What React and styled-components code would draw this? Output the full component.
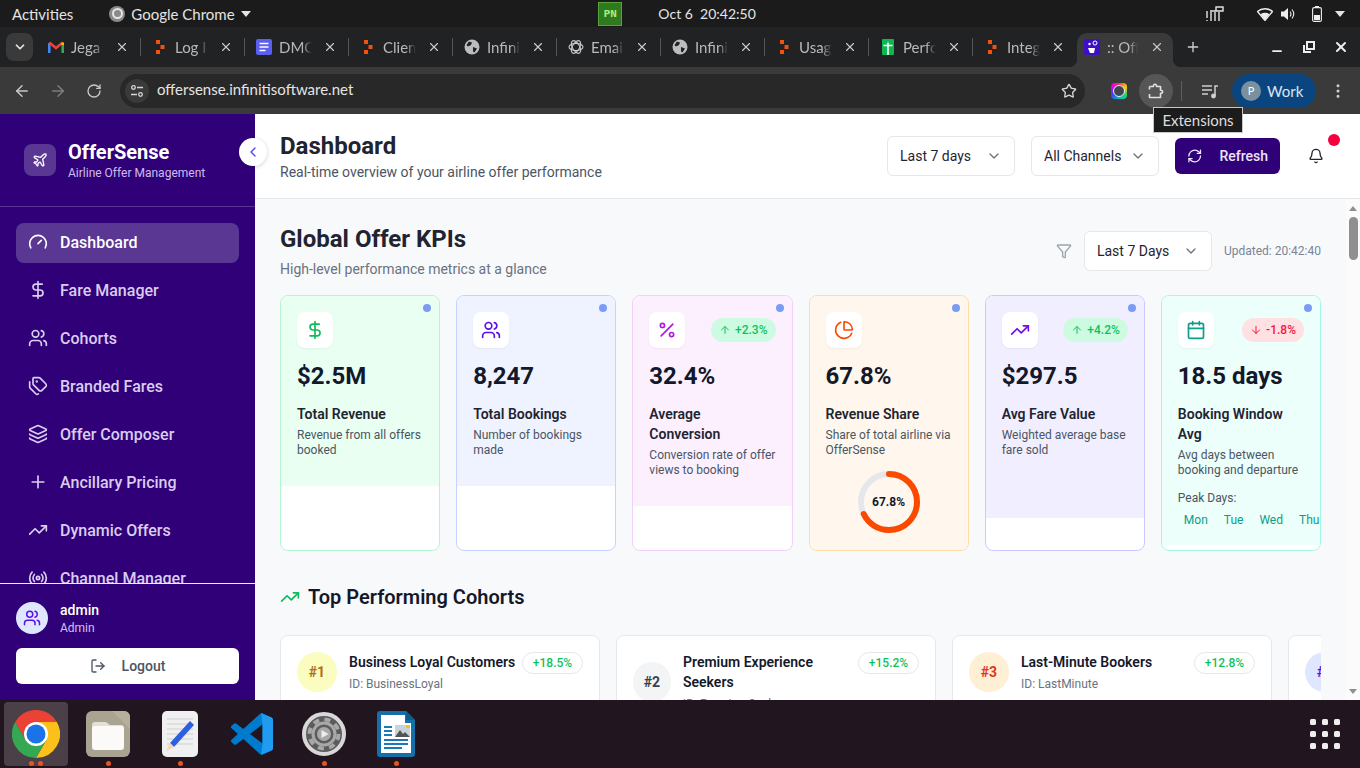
import React from "react";
import styled, { createGlobalStyle } from "styled-components";
import {
  ArrowDown, ArrowLeft, ArrowRight, ArrowUp, Bell, Calendar, ChartPie, ChevronDown, ChevronLeft,
  DollarSign, EllipsisVertical, Funnel, Gauge, Layers, LogOut, Percent, Plane, Plus, Radio,
  RefreshCw, RotateCw, Star, Tags, TrendingUp, Users, X, Minus,
} from "lucide-react";

const GlobalStyle = createGlobalStyle`
  html, body { margin: 0; padding: 0; background: #211520; }
  body { font-family: Roboto, "Liberation Sans", sans-serif; }
  * { box-sizing: border-box; }
`;

const PURPLE = "#300078";
const SYSTEM_FONT = `Lato, "Noto Sans", sans-serif`;

/* ---------- desktop + chrome ---------- */

const Screen = styled.div`
  width: 1360px;
  height: 768px;
  display: flex;
  flex-direction: column;
  overflow: hidden;
  position: relative;
`;

const TopBar = styled.div`
  height: 27px;
  background: #1b1b1b;
  color: #e4e4e4;
  font-family: ${SYSTEM_FONT};
  font-size: 15px;
  display: flex;
  align-items: center;
  padding: 0 9px 0 12px;
  flex-shrink: 0;
`;

const AppMenu = styled.div`
  display: flex;
  align-items: center;
  gap: 6px;
  margin-left: 36px;
  width: 489px;
`;

const AppBadge = styled.span`
  width: 16px;
  height: 16px;
  border-radius: 50%;
  background: #8a8a8a;
  display: grid;
  place-items: center;
  &::after {
    content: "";
    width: 7px;
    height: 7px;
    border-radius: 50%;
    border: 2px solid #e6e6e6;
  }
`;

const Caret = styled.span`
  width: 0;
  height: 0;
  border-left: 5px solid transparent;
  border-right: 5px solid transparent;
  border-top: 6px solid #e4e4e4;
`;

const PnBadge = styled.span`
  width: 24px;
  height: 24px;
  background: #2f7a1e;
  border: 1px solid #55a63a;
  color: #a8ef7c;
  font: 700 11px "Liberation Mono", monospace;
  display: grid;
  place-items: center;
`;

const Clock = styled.span`
  margin-left: 36px;
  font-size: 14px;
  white-space: pre;
`;

const TrayIcons = styled.div`
  margin-left: auto;
  display: flex;
  align-items: center;
`;

const TraySlot = styled.span`
  display: grid;
  place-items: center;
  width: ${(p) => p.$w}px;
`;

const TabStrip = styled.div`
  height: 40px;
  background: #202223;
  display: flex;
  align-items: flex-end;
  padding-left: 6px;
  flex-shrink: 0;
`;

const TabSearch = styled.span`
  width: 27px;
  height: 28px;
  margin-bottom: 6px;
  border-radius: 8px;
  background: #3a3a3a;
  color: #e4e4e4;
  display: grid;
  place-items: center;
  margin-right: 4px;
`;

const Tab = styled.div`
  width: ${(p) => (p.$active ? 96 : 104)}px;
  height: ${(p) => (p.$active ? 34 : 28)}px;
  margin-bottom: ${(p) => (p.$active ? 0 : 6)}px;
  padding: ${(p) => (p.$active ? "0 9px 6px 7px" : "0 12px 0 11px")};
  display: flex;
  align-items: center;
  gap: 7px;
  color: #b9b9b9;
  font-family: ${SYSTEM_FONT};
  font-size: 15px;
  position: relative;
  background: ${(p) => (p.$active ? "#3a3a3a" : "transparent")};
  border-radius: ${(p) => (p.$active ? "10px 10px 0 0" : "0")};
  &::after {
    content: "";
    display: ${(p) => (p.$last || p.$active ? "none" : "block")};
    position: absolute;
    right: 0;
    top: 5px;
    width: 1px;
    height: 18px;
    background: #555;
  }
`;

const TabFlare = styled.span`
  position: absolute;
  bottom: 0;
  width: 8px;
  height: 8px;
  ${(p) => (p.$side === "left" ? "left: -8px;" : "right: -8px;")}
  background: radial-gradient(
    circle at ${(p) => (p.$side === "left" ? "0 0" : "100% 0")},
    transparent 8px,
    #3a3a3a 8.5px
  );
`;

const TabFavicon = styled.span`
  width: 16px;
  height: 16px;
  flex-shrink: 0;
  display: grid;
  place-items: center;
`;

const TabTitle = styled.span`
  width: ${(p) => (p.$active ? 31 : 33)}px;
  overflow: hidden;
  white-space: nowrap;
  -webkit-mask-image: linear-gradient(to right, #000 70%, transparent);
  mask-image: linear-gradient(to right, #000 70%, transparent);
`;

const TabClose = styled.span`
  margin-left: auto;
  display: grid;
  place-items: center;
  color: #c8c8c8;
`;

const NewTab = styled.span`
  margin: 0 0 6px 12px;
  height: 28px;
  color: #d0d0d0;
  display: grid;
  place-items: center;
`;

const WindowControls = styled.div`
  margin: 0 0 6px auto;
  padding-right: 3px;
  height: 28px;
  display: flex;
  align-items: center;
  color: #eee;
`;

const WindowButton = styled.span`
  width: 32px;
  display: grid;
  place-items: center;
  padding-top: ${(p) => (p.$low ? 7 : 0)}px;
`;

const Toolbar = styled.div`
  height: 47px;
  background: #3a3a3a;
  display: flex;
  align-items: center;
  flex-shrink: 0;
  padding-left: 4px;
  color: #c8c8c8;
`;

const NavIcon = styled.span`
  width: 36px;
  display: grid;
  place-items: center;
  color: ${(p) => (p.$dim ? "#7d7d7d" : "#c8c8c8")};
`;

const Omnibox = styled.div`
  margin-left: 8px;
  width: 965px;
  height: 34px;
  border-radius: 17px;
  background: #282828;
  display: flex;
  align-items: center;
  padding: 0 4px 0 5px;
  font-family: ${SYSTEM_FONT};
  font-size: 15px;
  color: #e4e4e4;
`;

const OmniText = styled.span`
  padding-bottom: 3px;
`;

const SiteInfo = styled.span`
  width: 24px;
  height: 24px;
  border-radius: 50%;
  background: #3a3a3a;
  display: grid;
  place-items: center;
  margin-right: 8px;
`;

const StarSlot = styled.span`
  margin-left: auto;
  width: 24px;
  display: grid;
  place-items: center;
  color: #d8d8d8;
`;

const ExtensionRing = styled.span`
  width: 16px;
  height: 16px;
  margin-left: 26px;
  border-radius: 4px;
  background: conic-gradient(#ff2d55, #ffcc00, #25d366, #00bcd4, #3a42ff, #d500f9, #ff2d55);
  display: grid;
  place-items: center;
  &::after {
    content: "";
    width: 10px;
    height: 10px;
    border-radius: 50%;
    background: #3b4650;
    border: 1.5px solid #eee;
  }
`;

const ExtensionsButton = styled.span`
  width: 34px;
  height: 34px;
  margin-left: 12px;
  border-radius: 50%;
  background: #565656;
  display: grid;
  place-items: center;
`;

const ToolbarDivider = styled.span`
  width: 1px;
  height: 20px;
  background: #5e5e5e;
  margin: 0 19px 0 8px;
`;

const ProfilePill = styled.span`
  width: 84px;
  height: 34px;
  margin-left: 13px;
  border-radius: 17px;
  background: #0b4580;
  display: flex;
  align-items: center;
  gap: 6px;
  padding-left: 9px;
  color: #dce6f0;
  font-family: ${SYSTEM_FONT};
  font-size: 15px;
`;

const ProfileAvatar = styled.span`
  width: 20px;
  height: 20px;
  border-radius: 50%;
  background: #7a909f;
  color: #fff;
  font-size: 11px;
  display: grid;
  place-items: center;
`;

const MenuDots = styled.span`
  margin-left: 13px;
  display: grid;
  place-items: center;
  color: #d0d0d0;
`;

const Tooltip = styled.div`
  position: absolute;
  left: 1153px;
  top: 107px;
  width: 90px;
  height: 26px;
  background: #1c1c1c;
  border: 1px solid #c8c8c8;
  color: #dedede;
  font-family: ${SYSTEM_FONT};
  font-size: 15px;
  display: grid;
  place-items: center;
  z-index: 5;
`;

/* ---------- app shell ---------- */

const AppFrame = styled.div`
  height: 586px;
  display: flex;
  flex-shrink: 0;
  background: #f8f9fb;
`;

const Sidebar = styled.aside`
  width: 255px;
  flex-shrink: 0;
  background: ${PURPLE};
  display: flex;
  flex-direction: column;
  position: relative;
  z-index: 2;
`;

const BrandRow = styled.div`
  height: 93px;
  flex-shrink: 0;
  border-bottom: 1px solid #5a3793;
  display: flex;
  align-items: center;
  gap: 12px;
  padding: 0 24px;
`;

const BrandMark = styled.span`
  width: 32px;
  height: 32px;
  border-radius: 8px;
  background: #5a3793;
  color: #fff;
  display: grid;
  place-items: center;
`;

const BrandName = styled.div`
  color: #fff;
  font-size: 20px;
  font-weight: 700;
  line-height: 26px;
`;

const BrandTag = styled.div`
  color: #cdbdea;
  font-size: 12px;
  line-height: 16px;
`;

const CollapseButton = styled.span`
  position: absolute;
  left: 239px;
  top: 24px;
  width: 28px;
  height: 28px;
  border-radius: 50%;
  background: #fff;
  color: #4f46e5;
  box-shadow: 0 1px 4px rgba(0, 0, 0, 0.18);
  display: grid;
  place-items: center;
`;

const NavList = styled.nav`
  flex: 1;
  min-height: 0;
  overflow: hidden;
  padding: 16px 16px 0;
  display: flex;
  flex-direction: column;
  gap: 8px;
`;

const NavItem = styled.div`
  height: 40px;
  flex-shrink: 0;
  border-radius: 8px;
  padding: 0 0 2px 12px;
  display: flex;
  align-items: center;
  gap: 12px;
  font-size: 16px;
  font-weight: 500;
  color: ${(p) => (p.$active ? "#fff" : "#d9cdf0")};
  background: ${(p) => (p.$active ? "#5a3793" : "transparent")};
`;

const SidebarFooter = styled.div`
  height: 117px;
  flex-shrink: 0;
  border-top: 1px solid #f0ebf8;
  padding: 18px 16px 16px;
  display: flex;
  flex-direction: column;
  gap: 14px;
`;

const UserRow = styled.div`
  display: flex;
  align-items: flex-start;
  gap: 12px;
  height: 32px;
`;

const UserAvatar = styled.span`
  width: 32px;
  height: 32px;
  border-radius: 50%;
  background: #dfe6ff;
  color: #5b10e8;
  display: grid;
  place-items: center;
`;

const UserName = styled.div`
  color: #fff;
  font-size: 14px;
  font-weight: 500;
  line-height: 17px;
`;

const UserRole = styled.div`
  color: #d0c2ea;
  font-size: 12px;
  line-height: 15px;
  margin-top: 2px;
`;

const LogoutButton = styled.div`
  height: 36px;
  border-radius: 6px;
  background: #fff;
  color: #4b5563;
  font-size: 14px;
  font-weight: 500;
  display: flex;
  align-items: center;
  justify-content: center;
  gap: 16px;
`;

const Main = styled.main`
  flex: 1;
  min-width: 0;
  display: flex;
  flex-direction: column;
`;

const PageHeader = styled.header`
  height: 85px;
  flex-shrink: 0;
  background: #fff;
  border-bottom: 1px solid #e5e7eb;
  padding: 0 26px 1px 25px;
  display: flex;
  align-items: center;
  justify-content: space-between;
`;

const PageTitle = styled.h1`
  margin: 0;
  padding-top: 1px;
  font-size: 24px;
  font-weight: 700;
  line-height: 32px;
  color: #1f2430;
`;

const PageSubtitle = styled.p`
  margin: 0;
  font-size: 14px;
  line-height: 20px;
  color: #4b5563;
`;

const HeaderControls = styled.div`
  display: flex;
  align-items: center;
  gap: 16px;
`;

const SelectBox = styled.div`
  width: 128px;
  height: 40px;
  padding: 0 12px;
  background: #fff;
  border: 1px solid #e5e7eb;
  border-radius: 6px;
  display: flex;
  align-items: center;
  justify-content: space-between;
  font-size: 14px;
  color: #1f2430;
  svg { color: #6b7280; }
`;

const RefreshButton = styled.div`
  width: 105px;
  height: 36px;
  padding: 0 12px;
  border-radius: 6px;
  background: ${PURPLE};
  color: #ebe4fb;
  font-size: 14px;
  font-weight: 500;
  display: flex;
  align-items: center;
  gap: 17px;
`;

const BellButton = styled.span`
  width: 36px;
  height: 36px;
  margin-left: 2px;
  color: #1f2430;
  position: relative;
  display: grid;
  place-items: center;
`;

const BellDot = styled.span`
  position: absolute;
  top: -4px;
  right: -6px;
  width: 12px;
  height: 12px;
  border-radius: 50%;
  background: #f5003d;
`;

const Body = styled.div`
  flex: 1;
  min-height: 0;
  display: flex;
`;

const Content = styled.div`
  flex: 1;
  min-width: 0;
  overflow: hidden;
  padding: 23px 25px 0;
`;

const ScrollRail = styled.div`
  width: 14px;
  flex-shrink: 0;
  background: #fbfbfc;
  display: flex;
  flex-direction: column;
  align-items: center;
  padding: 7px 0 6px 0;
`;

const ScrollArrow = styled.span`
  width: 0;
  height: 0;
  border-left: 4.5px solid transparent;
  border-right: 4.5px solid transparent;
  ${(p) => (p.$down ? "border-top: 5px solid #8f8f8f; margin-top: auto;" : "border-bottom: 5px solid #8f8f8f;")}
`;

const ScrollThumb = styled.span`
  width: 9px;
  height: 43px;
  margin-top: 6px;
  border-radius: 5px;
  background: #8f8f8f;
`;

const SectionHead = styled.div`
  display: flex;
  align-items: center;
  justify-content: space-between;
  margin-bottom: 16px;
`;

const SectionTitle = styled.h2`
  margin: 0;
  padding-top: 1px;
  font-size: 24px;
  font-weight: 700;
  line-height: 32px;
  color: #1f2430;
`;

const SectionSubtitle = styled.p`
  margin: 4px 0 0;
  font-size: 14px;
  line-height: 20px;
  color: #6b7280;
`;

const SectionTools = styled.div`
  display: flex;
  align-items: center;
  color: #9ca3af;
`;

const ToolSelect = styled(SelectBox)`
  margin-left: 12px;
`;

const UpdatedAt = styled.span`
  margin-left: 12px;
  font-size: 12px;
  color: #7b8494;
`;

/* ---------- KPI cards ---------- */

const KpiGrid = styled.div`
  display: grid;
  grid-template-columns: repeat(6, 1fr);
  gap: 16px;
  height: 256px;
`;

const KpiCard = styled.article`
  position: relative;
  background: #fff;
  border: 1px solid ${(p) => p.$border};
  border-radius: 8px;
  overflow: hidden;
  display: flex;
  flex-direction: column;
`;

const KpiFill = styled.div`
  background: ${(p) => p.$bg};
  padding: 16px 16px ${(p) => p.$pb}px;
  flex: ${(p) => (p.$stretch ? 1 : "none")};
  min-width: 0;
`;

const KpiDot = styled.span`
  position: absolute;
  top: 8px;
  right: 8px;
  width: 8px;
  height: 8px;
  border-radius: 50%;
  background: #7c9bf5;
`;

const KpiTop = styled.div`
  display: flex;
  align-items: center;
  justify-content: space-between;
  margin-bottom: 12px;
`;

const KpiIcon = styled.span`
  width: 36px;
  height: 36px;
  border-radius: 8px;
  background: #fff;
  box-shadow: 0 1px 2px rgba(0, 0, 0, 0.05);
  color: ${(p) => p.$color};
  display: grid;
  place-items: center;
`;

const TrendBadge = styled.span`
  height: 24px;
  padding: 0 8px;
  border-radius: 12px;
  background: ${(p) => (p.$down ? "#ffe0e3" : "#cdfbe2")};
  color: ${(p) => (p.$down ? "#f5153f" : "#10c25b")};
  font-size: 12px;
  font-weight: 500;
  display: flex;
  align-items: center;
  gap: 4px;
  white-space: nowrap;
`;

const KpiValue = styled.div`
  font-size: 24px;
  font-weight: 700;
  line-height: 32px;
  color: #14182b;
  margin-bottom: 12px;
`;

const KpiTitle = styled.div`
  max-width: 120px;
  font-size: 14px;
  font-weight: 600;
  line-height: 20px;
  color: #1f2430;
`;

const KpiDesc = styled.div`
  margin-top: 4px;
  font-size: 12px;
  line-height: 15px;
  color: #4b5563;
`;

const DonutWrap = styled.div`
  display: grid;
  place-items: center;
  margin-top: 12px;
  & > * { grid-area: 1 / 1; }
`;

const DonutLabel = styled.span`
  font-size: 12px;
  font-weight: 700;
  color: #14182b;
`;

const PeakLabel = styled.div`
  margin-top: 12px;
  font-size: 12px;
  line-height: 16px;
  color: #4b5563;
`;

const PeakRow = styled.div`
  display: flex;
  gap: 4px;
  margin-top: 4px;
`;

const PeakChip = styled.span`
  padding: 2px 6px;
  font-size: 12px;
  line-height: 16px;
  color: #0d9d8a;
`;

/* ---------- cohorts ---------- */

const CohortHeading = styled.h2`
  margin: 32px 0 24px;
  font-size: 20px;
  font-weight: 600;
  line-height: 28px;
  color: #14182b;
  display: flex;
  align-items: center;
  gap: 8px;
  svg { color: #10b95a; }
`;

const CohortRow = styled.div`
  display: flex;
  gap: 16px;
  overflow: hidden;
`;

const CohortCard = styled.article`
  width: 320px;
  flex-shrink: 0;
  background: #fff;
  border: 1px solid #e5e7eb;
  border-radius: 8px;
  padding: 16px;
  display: flex;
  align-items: flex-start;
  justify-content: space-between;
  gap: 6px;
`;

const CohortMain = styled.div`
  display: flex;
  align-items: center;
  gap: 12px;
  min-width: 0;
`;

const RankCircle = styled.span`
  width: ${(p) => p.$w}px;
  height: 40px;
  flex-shrink: 0;
  border-radius: 50%;
  background: ${(p) => p.$bg};
  color: ${(p) => p.$color};
  font-size: 14px;
  font-weight: 700;
  display: grid;
  place-items: center;
`;

const CohortName = styled.div`
  font-size: 14px;
  font-weight: 600;
  line-height: 20px;
  color: #14182b;
`;

const CohortId = styled.div`
  margin-top: 4px;
  font-size: 12px;
  line-height: 16px;
  color: #6b7280;
  white-space: nowrap;
`;

const LiftBadge = styled.span`
  width: 61px;
  height: 22px;
  flex-shrink: 0;
  border: 1px solid #e5e7eb;
  border-radius: 11px;
  color: #10c25b;
  font-size: 12px;
  font-weight: 500;
  display: grid;
  place-items: center;
`;

/* ---------- dock ---------- */

const Dock = styled.footer`
  height: 68px;
  flex-shrink: 0;
  background: #211520;
  display: flex;
  align-items: center;
  position: relative;
  z-index: 3;
`;

const DockSlot = styled.div`
  width: 72px;
  height: 64px;
  position: relative;
  display: grid;
  place-items: center;
  &::before {
    content: "";
    display: ${(p) => (p.$active ? "block" : "none")};
    position: absolute;
    inset: 0 4px;
    background: #4b4048;
    border-radius: 4px;
  }
  & > svg { position: relative; }
`;

const DockPips = styled.span`
  position: absolute;
  bottom: 0;
  left: 0;
  right: 0;
  display: flex;
  justify-content: center;
  gap: 4px;
`;

const DockPip = styled.span`
  width: 5px;
  height: 5px;
  border-radius: 50%;
  background: #e95420;
`;

const AppGrid = styled.div`
  margin-left: auto;
  margin-right: 20px;
  display: grid;
  grid-template-columns: repeat(3, 6px);
  gap: 6px;
`;

const AppGridDot = styled.span`
  width: 6px;
  height: 6px;
  border-radius: 1.5px;
  background: #eee;
`;

/* ---------- drawn icons ---------- */

const GmailIcon = () => (
  <svg width="16" height="14" viewBox="0 0 16 14" fill="none" strokeWidth="2.6">
    <path d="M1.3 13V3" stroke="#4285f4" />
    <path d="M14.7 13V3" stroke="#34a853" />
    <path d="M1.3 2.5L8 8l6.7-5.5" stroke="#ea4335" />
    <path d="M14.7 5V2.5" stroke="#fbbc04" />
  </svg>
);

const ZohoIcon = () => (
  <svg width="10" height="14" viewBox="0 0 10 14" fill="#f4500f">
    <rect x="1" y="0" width="4" height="4" />
    <rect x="5.5" y="5" width="4" height="4" />
    <rect x="1" y="10" width="4" height="4" />
  </svg>
);

const DocIcon = () => (
  <svg width="16" height="16" viewBox="0 0 16 16">
    <rect width="16" height="16" rx="2" fill="#5b5ff0" />
    <path d="M3.5 4.5h9M3.5 8h9M3.5 11.5h6" stroke="#fff" strokeWidth="1.7" />
  </svg>
);

const GlobeIcon = () => (
  <svg width="16" height="16" viewBox="0 0 16 16">
    <circle cx="8" cy="8" r="7.5" fill="#bdbdbd" />
    <path d="M5 2.5l3 1-1 2.5-3 1.5L2.5 6zM9 8l4 1.5-2.5 4-1.5-1z" fill="#202223" />
  </svg>
);

const KnotIcon = () => (
  <svg width="16" height="16" viewBox="0 0 16 16" fill="none" stroke="#c8c8c8" strokeWidth="1.1">
    <ellipse cx="8" cy="8" rx="7" ry="3.6" />
    <ellipse cx="8" cy="8" rx="7" ry="3.6" transform="rotate(60 8 8)" />
    <ellipse cx="8" cy="8" rx="7" ry="3.6" transform="rotate(120 8 8)" />
  </svg>
);

const SheetIcon = () => (
  <svg width="12" height="16" viewBox="0 0 12 16">
    <rect width="12" height="16" rx="1" fill="#0fb652" />
    <path d="M6 3.5V16M1.5 6.5h9" stroke="#fff" strokeWidth="1.5" />
  </svg>
);

const OfferIcon = () => (
  <svg width="16" height="16" viewBox="0 0 16 16">
    <rect width="16" height="16" rx="2" fill="#3d10c8" />
    <circle cx="11" cy="4" r="2" fill="none" stroke="#fff" strokeWidth="1" />
    <circle cx="5.5" cy="5" r="1.2" fill="#fff" />
    <path d="M4 9h7l-1 5H6z" fill="#fff" />
  </svg>
);

const TuneIcon = () => (
  <svg width="14" height="14" viewBox="0 0 14 14" fill="none" stroke="#d6d6d6" strokeWidth="1.3">
    <circle cx="3.5" cy="3.5" r="1.8" />
    <path d="M7 3.5h6M1 10.5h6" />
    <circle cx="10.5" cy="10.5" r="1.8" />
  </svg>
);

const PuzzleIcon = () => (
  <svg width="20" height="20" viewBox="0 0 20 20" fill="none" stroke="#e0e0e0" strokeWidth="1.6">
    <path d="M3.5 5.5h4c-.5-3 3.5-3 3 0h4v3.8c2.8-.5 2.8 3.5 0 3v4.200h-11v-3.500M3.500 5.500v3" strokeLinejoin="round" />
  </svg>
);

const QueueIcon = () => (
  <svg width="18" height="16" viewBox="0 0 18 16" fill="none" stroke="#d0d0d0" strokeWidth="1.5">
    <path d="M1 3h10M1 7h10M1 11h6" />
    <path d="M14 13V3h3" />
    <circle cx="12.500" cy="13" r="1.700" fill="#d0d0d0" />
  </svg>
);

const TrayBars = () => (
  <svg width="18" height="16" viewBox="0 0 18 16" fill="none" stroke="#e4e4e4" strokeWidth="1.4">
    <path d="M1 5v7M1 14v1M5 6v9M9 6v9M13 6v9M4 5h13M10 1h7v4h-7z" />
  </svg>
);

const WifiIcon = () => (
  <svg width="16" height="14" viewBox="0 0 16 14">
    <path d="M8 13.500L.5 4.500C4.500.8 11.500.8 15.500 4.500z" fill="none" stroke="#eee" strokeWidth="1.300" />
    <path d="M8 13L3.500 7.200c2.800-1.800 6.200-1.800 9 0z" fill="#eee" />
  </svg>
);

const VolumeIcon = () => (
  <svg width="14" height="14" viewBox="0 0 14 14" fill="none">
    <path d="M0 4.500h3L7 1v12L3 9.500H0z" fill="#eee" />
    <path d="M9 4.500c1.200 1.500 1.200 3.500 0 5M11 2.500c2.200 2.800 2.200 6.200 0 9" stroke="#eee" strokeWidth="1.100" />
  </svg>
);

const BatteryIcon = () => (
  <svg width="10" height="16" viewBox="0 0 10 16">
    <rect x=".6" y="1.600" width="8.800" height="13.800" rx="1.500" fill="none" stroke="#eee" strokeWidth="1.100" />
    <rect x="3" y="0" width="4" height="2" fill="#eee" />
    <rect x="2" y="9" width="6" height="5" fill="#eee" />
  </svg>
);

const ChromeLogo = () => (
  <svg width="48" height="48" viewBox="0 0 48 48">
    <path d="M24 12H44.800A24 24 0 0 0 3.200 12L13.600 30 24 24z" fill="#ea4335" />
    <path d="M44.800 12H24L34.400 30 24 48A24 24 0 0 0 44.800 12z" fill="#fdc01a" />
    <path d="M24 48L34.400 30 24 24 13.600 30 3.200 12A24 24 0 0 0 24 48z" fill="#34a853" />
    <circle cx="24" cy="24" r="12" fill="#fff" />
    <circle cx="24" cy="24" r="9.500" fill="#1a73e8" />
  </svg>
);

const FilesLogo = () => (
  <svg width="44" height="46" viewBox="0 0 44 46">
    <rect width="44" height="46" rx="6" fill="#a9a391" />
    <path d="M26 0h12a6 6 0 0 1 6 6v12z" fill="#b5af9e" />
    <path d="M6 14a3 3 0 0 1 3-3h11l4 3h11a3 3 0 0 1 3 3v17H6z" fill="#e4e0d4" />
    <rect x="6" y="15" width="32" height="24" rx="3" fill="#fbfaf8" />
  </svg>
);

const EditorLogo = () => (
  <svg width="36" height="46" viewBox="0 0 36 46">
    <rect width="36" height="46" rx="5" fill="#f0f0f0" />
    <path d="M5 8h26M5 13h26M5 18h26M5 23h26M5 28h26M5 33h26" stroke="#cfcfcf" />
    <path d="M32 14L12 36l-4-4L28 10z" fill="#2d5fe0" />
    <path d="M8 32l4 4-8 4z" fill="#f6d5ad" />
  </svg>
);

const VsCodeLogo = () => (
  <svg width="42" height="42" viewBox="0 0 100 100">
    <path
      d="M96.460 10.800L75.860.900a6.230 6.230 0 0 0-7.100 1.200L29.350 38.100 12.190 25.100a4.160 4.160 0 0 0-5.320.240L1.360 30.300a4.170 4.170 0 0 0 0 6.160L16.250 50 1.360 63.560a4.170 4.170 0 0 0 0 6.160l5.510 4.960a4.160 4.160 0 0 0 5.320.240l17.160-13.030 39.410 36a6.220 6.220 0 0 0 7.100 1.200l20.600-9.900a6.250 6.250 0 0 0 3.540-5.630V16.430a6.250 6.250 0 0 0-3.540-5.630zM75 72.700L45.100 50 75 27.300z"
      fill="#007acc"
    />
    <path d="M72 .5l24.500 10.300Q100 12.500 100 16.400v67.200q0 3.900-3.500 5.600L72 99.500l3-26.800V27.300z" fill="#1f9cf0" />
  </svg>
);

const SettingsLogo = () => (
  <svg width="44" height="44" viewBox="0 0 44 44" fill="none">
    <circle cx="22" cy="22" r="20" fill="#5c5c5c" stroke="#d8d8d8" strokeWidth="4" />
    <circle cx="22" cy="22" r="14.500" stroke="#a8a8a8" strokeWidth="4" strokeDasharray="6 5.390" />
    <circle cx="22" cy="22" r="11" stroke="#a8a8a8" strokeWidth="3" />
    <circle cx="22" cy="22" r="7" fill="#a8a8a8" />
    <path d="M19.500 18l7 4-7 4z" fill="#eee" />
  </svg>
);

const WriterLogo = () => (
  <svg width="38" height="46" viewBox="0 0 38 46">
    <path d="M3 0h26l9 9v34a3 3 0 0 1-3 3H3a3 3 0 0 1-3-3V3a3 3 0 0 1 3-3z" fill="#166fa8" />
    <path d="M4 4h24v8h6v30H4z" fill="#fff" />
    <path d="M29 0l9 9h-9z" fill="#0c5c8f" />
    <path d="M7 16h8M7 20h8M7 24h8M7 29h24M7 33h24M7 37h18" stroke="#1a7ab8" strokeWidth="2" />
    <rect x="18" y="14" width="15" height="12" fill="#c8d4dc" />
    <path d="M18 26l5-7 3 4 2-2 5 5z" fill="#555" />
    <rect x="29" y="14" width="4" height="3" fill="#f0c030" />
  </svg>
);

/* ---------- data ---------- */

const tabs = [
  { title: "Jega", icon: <GmailIcon /> },
  { title: "Log I", icon: <ZohoIcon /> },
  { title: "DMC", icon: <DocIcon /> },
  { title: "Clien", icon: <ZohoIcon /> },
  { title: "Infini", icon: <GlobeIcon /> },
  { title: "Emai", icon: <KnotIcon /> },
  { title: "Infini", icon: <GlobeIcon /> },
  { title: "Usag", icon: <ZohoIcon /> },
  { title: "Perfo", icon: <SheetIcon /> },
  { title: "Integ", icon: <ZohoIcon />, last: true },
  { title: ":: Off", icon: <OfferIcon />, active: true },
];

const navItems = [
  { label: "Dashboard", icon: Gauge, active: true },
  { label: "Fare Manager", icon: DollarSign },
  { label: "Cohorts", icon: Users },
  { label: "Branded Fares", icon: Tags },
  { label: "Offer Composer", icon: Layers },
  { label: "Ancillary Pricing", icon: Plus },
  { label: "Dynamic Offers", icon: TrendingUp },
  { label: "Channel Manager", icon: Radio },
];

const cohorts = [
  { rank: "#1", name: "Business Loyal Customers", id: "BusinessLoyal", lift: "+18.5%", bg: "#fbfcc0", color: "#b0700f", w: 40 },
  { rank: "#2", name: "Premium Experience Seekers", id: "PremiumSeekers", lift: "+15.2%", bg: "#f3f4f6", color: "#374151", w: 38 },
  { rank: "#3", name: "Last-Minute Bookers", id: "LastMinute", lift: "+12.8%", bg: "#ffefd5", color: "#e0381a", w: 40 },
  { rank: "#4", name: "Family Travellers", id: "Family", lift: "+10.4%", bg: "#dfe6ff", color: "#5b10e8", w: 40 },
];

function Trend({ value, down }) {
  const Arrow = down ? ArrowDown : ArrowUp;
  return (
    <TrendBadge $down={down}>
      <Arrow size={12} />
      {value}
    </TrendBadge>
  );
}

function Select({ label, as: Comp = SelectBox }) {
  return (
    <Comp>
      {label}
      <ChevronDown size={16} />
    </Comp>
  );
}

function Donut() {
  const r = 28;
  const len = 2 * Math.PI * r;
  return (
    <DonutWrap>
      <svg width="64" height="64" viewBox="0 0 64 64" fill="none" strokeWidth="6">
        <circle cx="32" cy="32" r={r} stroke="#e5e7eb" />
        <circle
          cx="32"
          cy="32"
          r={r}
          stroke="#f94a00"
          strokeDasharray={`${len * 0.678} ${len}`}
          strokeLinecap="round"
          transform="rotate(-90 32 32)"
        />
      </svg>
      <DonutLabel>67.8%</DonutLabel>
    </DonutWrap>
  );
}

export default function App() {
  return (
    <Screen>
      <GlobalStyle />
      <TopBar>
        Activities
        <AppMenu>
          <AppBadge />
          Google Chrome
          <Caret />
        </AppMenu>
        <PnBadge>PN</PnBadge>
        <Clock>Oct 6  20:42:50</Clock>
        <TrayIcons>
          <TraySlot $w={30}><TrayBars /></TraySlot>
          <TraySlot $w={23} />
          <TraySlot $w={24}><WifiIcon /></TraySlot>
          <TraySlot $w={22}><VolumeIcon /></TraySlot>
          <TraySlot $w={6} />
          <TraySlot $w={24}><BatteryIcon /></TraySlot>
          <TraySlot $w={22}><Caret /></TraySlot>
        </TrayIcons>
      </TopBar>

      <TabStrip>
        <TabSearch><ChevronDown size={14} strokeWidth={3} /></TabSearch>
        {tabs.map((t, i) => (
          <Tab key={i} $active={t.active} $last={t.last}>
            {t.active && <TabFlare $side="left" />}
            <TabFavicon>{t.icon}</TabFavicon>
            <TabTitle $active={t.active}>{t.title}</TabTitle>
            <TabClose><X size={14} strokeWidth={2} /></TabClose>
            {t.active && <TabFlare $side="right" />}
          </Tab>
        ))}
        <NewTab><Plus size={16} strokeWidth={2} /></NewTab>
        <WindowControls>
          <WindowButton $low><Minus size={14} strokeWidth={3} /></WindowButton>
          <WindowButton>
            <svg width="12" height="12" viewBox="0 0 12 12" fill="none" stroke="#eee" strokeWidth="2">
              <rect x="4" y="1" width="7" height="7" />
              <path d="M1 4v7h7" />
            </svg>
          </WindowButton>
          <WindowButton><X size={16} strokeWidth={3} /></WindowButton>
        </WindowControls>
      </TabStrip>

      <Toolbar>
        <NavIcon><ArrowLeft size={18} /></NavIcon>
        <NavIcon $dim><ArrowRight size={18} /></NavIcon>
        <NavIcon><RotateCw size={16} /></NavIcon>
        <Omnibox>
          <SiteInfo><TuneIcon /></SiteInfo>
          <OmniText>offersense.infinitisoftware.net</OmniText>
          <StarSlot><Star size={16} /></StarSlot>
        </Omnibox>
        <ExtensionRing />
        <ExtensionsButton><PuzzleIcon /></ExtensionsButton>
        <ToolbarDivider />
        <QueueIcon />
        <ProfilePill>
          <ProfileAvatar>P</ProfileAvatar>
          Work
        </ProfilePill>
        <MenuDots><EllipsisVertical size={18} /></MenuDots>
      </Toolbar>
      <Tooltip>Extensions</Tooltip>

      <AppFrame>
        <Sidebar>
          <BrandRow>
            <BrandMark><Plane size={16} /></BrandMark>
            <div>
              <BrandName>OfferSense</BrandName>
              <BrandTag>Airline Offer Management</BrandTag>
            </div>
          </BrandRow>
          <CollapseButton><ChevronLeft size={16} /></CollapseButton>
          <NavList>
            {navItems.map((n) => (
              <NavItem key={n.label} $active={n.active}>
                <n.icon size={20} />
                {n.label}
              </NavItem>
            ))}
          </NavList>
          <SidebarFooter>
            <UserRow>
              <UserAvatar><Users size={18} /></UserAvatar>
              <div>
                <UserName>admin</UserName>
                <UserRole>Admin</UserRole>
              </div>
            </UserRow>
            <LogoutButton>
              <LogOut size={16} />
              Logout
            </LogoutButton>
          </SidebarFooter>
        </Sidebar>

        <Main>
          <PageHeader>
            <div>
              <PageTitle>Dashboard</PageTitle>
              <PageSubtitle>Real-time overview of your airline offer performance</PageSubtitle>
            </div>
            <HeaderControls>
              <Select label="Last 7 days" />
              <Select label="All Channels" />
              <RefreshButton><RefreshCw size={16} />Refresh</RefreshButton>
              <BellButton>
                <Bell size={16} />
                <BellDot />
              </BellButton>
            </HeaderControls>
          </PageHeader>

          <Body>
            <Content>
              <SectionHead>
                <div>
                  <SectionTitle>Global Offer KPIs</SectionTitle>
                  <SectionSubtitle>High-level performance metrics at a glance</SectionSubtitle>
                </div>
                <SectionTools>
                  <Funnel size={16} />
                  <Select label="Last 7 Days" as={ToolSelect} />
                  <UpdatedAt>Updated: 20:42:40</UpdatedAt>
                </SectionTools>
              </SectionHead>

              <KpiGrid>
                <KpiCard $border="#b4f5d2">
                  <KpiDot />
                  <KpiFill $bg="#e9fff2" $pb={28}>
                    <KpiTop><KpiIcon $color="#10b95a"><DollarSign size={20} /></KpiIcon></KpiTop>
                    <KpiValue>$2.5M</KpiValue>
                    <KpiTitle>Total Revenue</KpiTitle>
                    <KpiDesc>Revenue from all offers booked</KpiDesc>
                  </KpiFill>
                </KpiCard>

                <KpiCard $border="#c3d4fe">
                  <KpiDot />
                  <KpiFill $bg="#eff3ff" $pb={28}>
                    <KpiTop><KpiIcon $color="#5b10e8"><Users size={20} /></KpiIcon></KpiTop>
                    <KpiValue>8,247</KpiValue>
                    <KpiTitle>Total Bookings</KpiTitle>
                    <KpiDesc>Number of bookings made</KpiDesc>
                  </KpiFill>
                </KpiCard>

                <KpiCard $border="#f3d0fb">
                  <KpiDot />
                  <KpiFill $bg="#fcf0ff" $pb={28}>
                    <KpiTop>
                      <KpiIcon $color="#b416e8"><Percent size={20} /></KpiIcon>
                      <Trend value="+2.3%" />
                    </KpiTop>
                    <KpiValue>32.4%</KpiValue>
                    <KpiTitle>Average Conversion</KpiTitle>
                    <KpiDesc>Conversion rate of offer views to booking</KpiDesc>
                  </KpiFill>
                </KpiCard>

                <KpiCard $border="#fddcaa">
                  <KpiDot />
                  <KpiFill $bg="#fff7ed" $pb={0} $stretch>
                    <KpiTop><KpiIcon $color="#f94a00"><ChartPie size={20} /></KpiIcon></KpiTop>
                    <KpiValue>67.8%</KpiValue>
                    <KpiTitle>Revenue Share</KpiTitle>
                    <KpiDesc>Share of total airline via OfferSense</KpiDesc>
                    <Donut />
                  </KpiFill>
                </KpiCard>

                <KpiCard $border="#cfc8fe">
                  <KpiDot />
                  <KpiFill $bg="#f1efff" $pb={60}>
                    <KpiTop>
                      <KpiIcon $color="#6f0fe0"><TrendingUp size={20} /></KpiIcon>
                      <Trend value="+4.2%" />
                    </KpiTop>
                    <KpiValue>$297.5</KpiValue>
                    <KpiTitle>Avg Fare Value</KpiTitle>
                    <KpiDesc>Weighted average base fare sold</KpiDesc>
                  </KpiFill>
                </KpiCard>

                <KpiCard $border="#a5f8e6">
                  <KpiDot />
                  <KpiFill $bg="#ecfffa" $pb={15}>
                    <KpiTop>
                      <KpiIcon $color="#0d9d8a"><Calendar size={20} /></KpiIcon>
                      <Trend value="-1.8%" down />
                    </KpiTop>
                    <KpiValue>18.5 days</KpiValue>
                    <KpiTitle>Booking Window Avg</KpiTitle>
                    <KpiDesc>Avg days between booking and departure</KpiDesc>
                    <PeakLabel>Peak Days:</PeakLabel>
                    <PeakRow>
                      {["Mon", "Tue", "Wed", "Thu"].map((d) => (
                        <PeakChip key={d}>{d}</PeakChip>
                      ))}
                    </PeakRow>
                  </KpiFill>
                </KpiCard>
              </KpiGrid>

              <CohortHeading><TrendingUp size={20} />Top Performing Cohorts</CohortHeading>
              <CohortRow>
                {cohorts.map((c) => (
                  <CohortCard key={c.rank}>
                    <CohortMain>
                      <RankCircle $w={c.w} $bg={c.bg} $color={c.color}>{c.rank}</RankCircle>
                      <div>
                        <CohortName>{c.name}</CohortName>
                        <CohortId>ID: {c.id}</CohortId>
                      </div>
                    </CohortMain>
                    <LiftBadge>{c.lift}</LiftBadge>
                  </CohortCard>
                ))}
              </CohortRow>
            </Content>
            <ScrollRail>
              <ScrollArrow />
              <ScrollThumb />
              <ScrollArrow $down />
            </ScrollRail>
          </Body>
        </Main>
      </AppFrame>

      <Dock>
        <DockSlot $active><ChromeLogo /><DockPips><DockPip /><DockPip /></DockPips></DockSlot>
        <DockSlot><FilesLogo /><DockPips><DockPip /></DockPips></DockSlot>
        <DockSlot><EditorLogo /><DockPips><DockPip /></DockPips></DockSlot>
        <DockSlot><VsCodeLogo /></DockSlot>
        <DockSlot><SettingsLogo /><DockPips><DockPip /></DockPips></DockSlot>
        <DockSlot><WriterLogo /><DockPips><DockPip /></DockPips></DockSlot>
        <AppGrid>
          {Array.from({ length: 9 }).map((_, i) => <AppGridDot key={i} />)}
        </AppGrid>
      </Dock>
    </Screen>
  );
}
